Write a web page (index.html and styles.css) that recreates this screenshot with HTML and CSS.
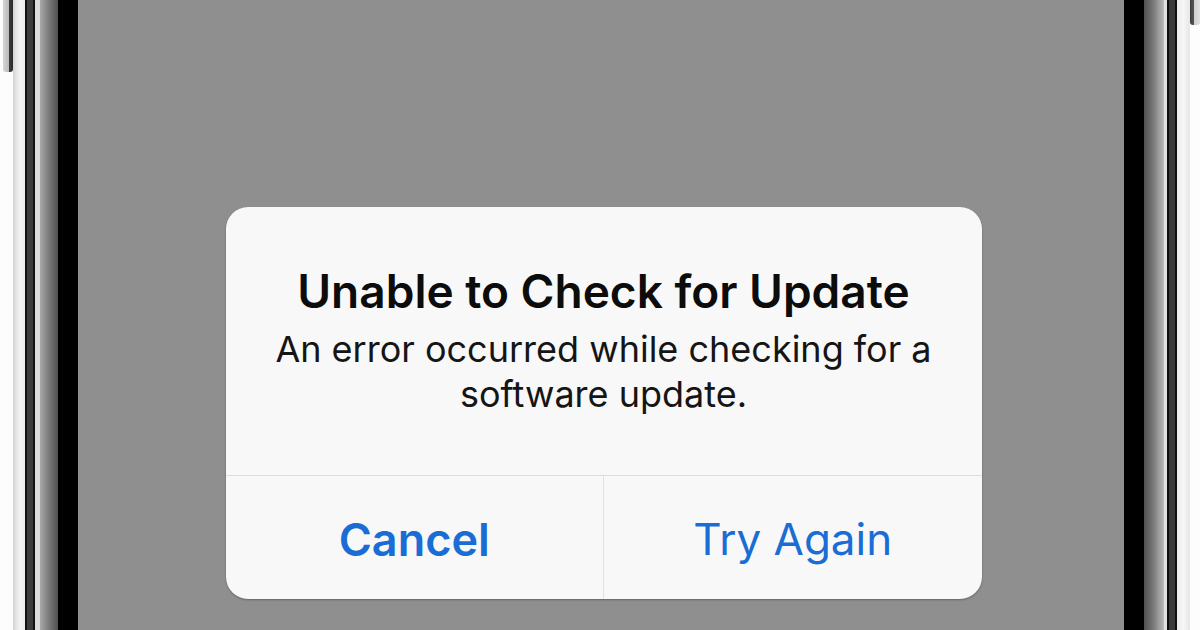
FILE: index.html
```html
<!DOCTYPE html>
<html>
<head>
    <meta charset="utf-8">
    <title>Unable to Check for Update</title>
    <link rel="stylesheet" href="styles.css">
</head>
<body>
    <div class="phone">
        <div class="edge edge-outer-l">
            <div class="side-key side-key-l"></div>
        </div>
        <div class="edge edge-rim-l"></div>
        <div class="edge edge-band"></div>
        <div class="edge edge-shine"></div>
        <div class="edge edge-bevel-l"></div>
        <div class="edge edge-bezel"></div>

        <div class="screen">
            <div class="alert">
                <div class="alert-body">
                    <h2 class="alert-title">Unable to Check for Update</h2>
                    <p class="alert-msg">An error occurred while checking for a<br>software update.</p>
                </div>
                <div class="alert-actions">
                    <div class="action action-bold">Cancel</div>
                    <div class="action">Try Again</div>
                </div>
            </div>
        </div>

        <div class="edge edge-bezel"></div>
        <div class="edge edge-bevel-r"></div>
        <div class="edge edge-shine-r"></div>
        <div class="edge edge-band"></div>
        <div class="edge edge-rim-r"></div>
        <div class="edge edge-outer-r">
            <div class="side-key side-key-r"></div>
        </div>
    </div>
</body>
</html>
```

FILE: styles.css
```css
html, body {
    margin: 0;
    padding: 0;
    background: #fdfdfd;
}

.phone {
    display: flex;
    width: 1200px;
    height: 630px;
    overflow: hidden;
}

.edge {
    flex: none;
    height: 100%;
}

/* left side of the case */
.edge-outer-l {
    width: 13px;
    background: #fdfdfd;
}
.side-key {
    height: 72px;
    border-radius: 0 0 3px 3px;
}
.side-key-l {
    width: 10px;
    margin-left: 3px;
    background: linear-gradient(to right, #d6d6d6 0, #bcbcbc 55%, #3c3c3c 60%, #2a2a2a 100%);
}
.edge-rim-l {
    width: 12px;
    background: linear-gradient(to right, #d2d2d2 0, #e4e4e4 25%, #f4f4f4 60%, #ececec 100%);
}
.edge-band {
    width: 10px;
    box-sizing: border-box;
    background: #3b3b3b;
    border-left: 2px solid #111;
    border-right: 2px solid #111;
}
.edge-shine {
    width: 5px;
    background: #dcdcdc;
}
.edge-bevel-l {
    width: 18px;
    background: linear-gradient(to right, #a9a9a9, #7a7a7a 50%, #505050);
}
.edge-bezel {
    width: 20px;
    background: #000;
}

/* right side of the case */
.edge-bevel-r {
    width: 20px;
    background: linear-gradient(to right, #4f4f4f, #7c7c7c 50%, #bdbdbd);
}
.edge-shine-r {
    width: 3px;
    background: #e2e2e2;
}
.edge-rim-r {
    width: 13px;
    background: linear-gradient(to right, #ededed 0, #f6f6f6 50%, #e6e6e6 100%);
}
.edge-outer-r {
    width: 10px;
    background: #fdfdfd;
}
.side-key-r {
    height: 25px;
    width: 10px;
    background: linear-gradient(to right, #3c3c3c 0, #555 40%, #cfcfcf 45%, #e0e0e0 100%);
}

/* screen */
.screen {
    flex: 1;
    background: #8f8f8f;
    display: flex;
    justify-content: center;
    align-items: flex-start;
    padding-top: 207px;
}

.alert {
    width: 756px;
    margin-left: 5px;
    background: #f8f8f8;
    border-radius: 22px;
    box-shadow: 0 1px 2px rgba(0, 0, 0, 0.3);
    overflow: hidden;
    font-family: Inter, "Noto Sans", sans-serif;
    text-align: center;
}

.alert-body {
    height: 269px;
    box-sizing: border-box;
    padding-top: 56px;
    border-bottom: 1px solid #dcdcdc;
}

.alert-title {
    margin: 0;
    font-size: 46px;
    font-weight: 600;
    line-height: 56px;
    color: #0c0c0c;
}

.alert-msg {
    margin: 8px 0 0;
    font-size: 36px;
    font-weight: 400;
    line-height: 45px;
    color: #151515;
}

.alert-actions {
    display: flex;
    height: 123px;
}

.action {
    flex: 1;
    display: flex;
    align-items: center;
    justify-content: center;
    padding-top: 3px;
    box-sizing: border-box;
    font-size: 44px;
    line-height: 45px;
    font-weight: 400;
    color: #1a6dd4;
}
.action + .action {
    border-left: 1px solid #e2e2e2;
}
.action-bold {
    font-size: 45px;
    font-weight: 600;
}
```
